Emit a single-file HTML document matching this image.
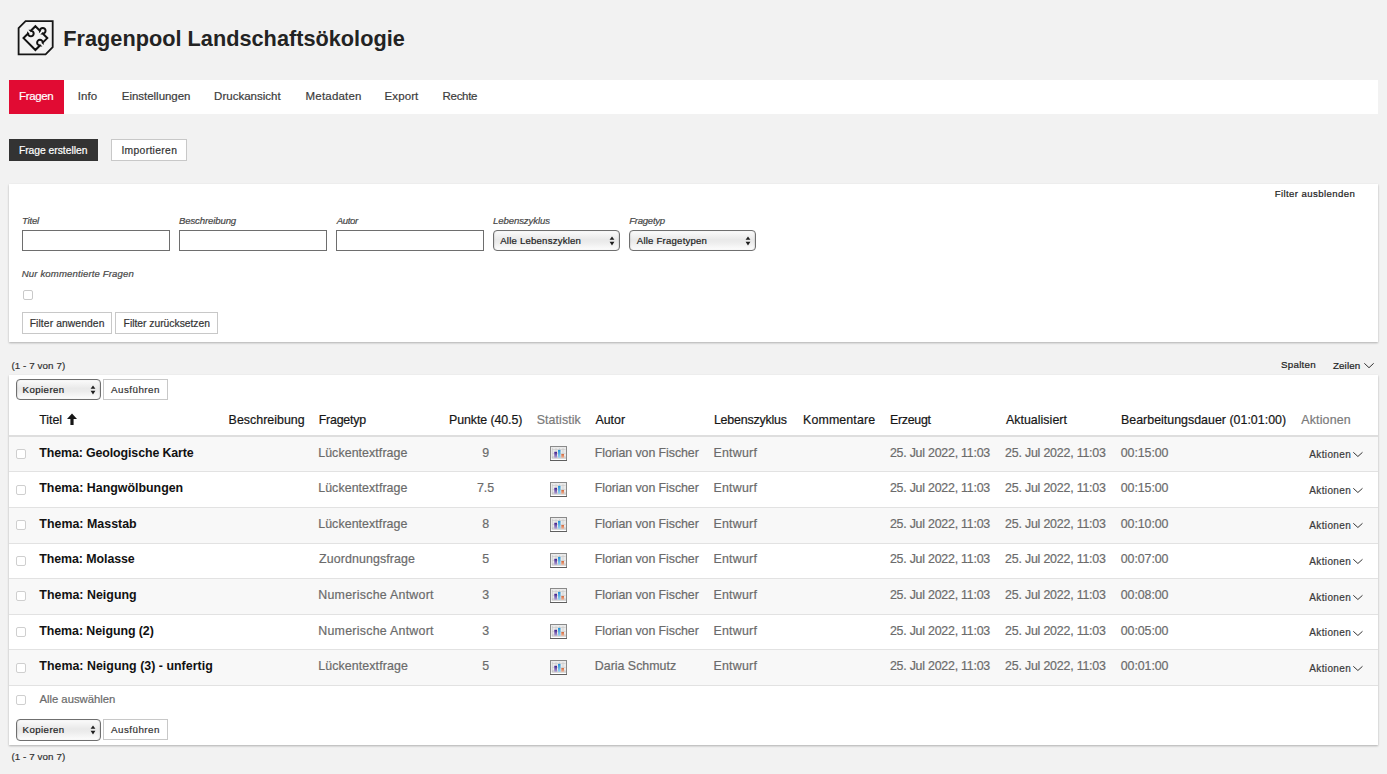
<!DOCTYPE html>
<html><head><meta charset="utf-8"><title>Fragenpool</title>
<style>
html,body{margin:0;padding:0;}
body{width:1387px;height:774px;background:#f2f2f2;position:relative;overflow:hidden;font-family:"Liberation Sans",sans-serif;}
body>div,body>span,body>svg{position:absolute;display:block;}
span{white-space:nowrap;-webkit-text-stroke:0.2px currentColor;}
span.b{-webkit-text-stroke:0;}
</style></head><body>
<svg style="left:0;top:0" width="80" height="70" viewBox="0 0 80 70"><path d="M25.6 21.2 H52.7 V47.2 L45.6 54.3 H18.6 V28.2 Z" fill="none" stroke="#161616" stroke-width="1.8"/>
<path transform="translate(35.4 38.1) rotate(45)" d="M-8.4 -8.4 L-1.95 -8.4 L-1.95 -8.391 A2.8 2.8 0 1 1 1.95 -8.391 L1.95 -8.4 L8.4 -8.4 L8.4 -1.95 L8.409 -1.95 A2.8 2.8 0 1 0 8.409 1.95 L8.4 1.95 L8.4 8.4 L-8.4 8.4 L-8.4 1.95 L-8.409 1.95 A2.8 2.8 0 1 0 -8.409 -1.95 L-8.4 -1.95 Z" fill="none" stroke="#111" stroke-width="2"/></svg>
<span class="b" style="left:63.30px;top:27.36px;font-size:21.7px;line-height:24.239px;color:#232323;font-weight:bold;letter-spacing:0.017px;">Fragenpool Landschaftsökologie</span>
<div style="left:9px;top:80px;width:1369px;height:34px;background:#fff"></div>
<div style="left:9px;top:80px;width:55px;height:34px;background:#e10b33"></div>
<span style="left:19.10px;top:90.29px;font-size:11.5px;line-height:12.845px;color:#fff;letter-spacing:-0.388px;">Fragen</span>
<span style="left:77.80px;top:90.29px;font-size:11.5px;line-height:12.845px;color:#3c3c3c;letter-spacing:0.074px;">Info</span>
<span style="left:121.80px;top:90.29px;font-size:11.5px;line-height:12.845px;color:#3c3c3c;letter-spacing:-0.030px;">Einstellungen</span>
<span style="left:214.10px;top:90.29px;font-size:11.5px;line-height:12.845px;color:#3c3c3c;letter-spacing:0.013px;">Druckansicht</span>
<span style="left:305.60px;top:90.29px;font-size:11.5px;line-height:12.845px;color:#3c3c3c;letter-spacing:0.182px;">Metadaten</span>
<span style="left:384.56px;top:90.29px;font-size:11.5px;line-height:12.845px;color:#3c3c3c;letter-spacing:0.092px;">Export</span>
<span style="left:442.60px;top:90.29px;font-size:11.5px;line-height:12.845px;color:#3c3c3c;letter-spacing:-0.308px;">Rechte</span>
<div style="left:9px;top:139px;width:89px;height:22px;background:#333"></div>
<span style="left:18.92px;top:144.58px;font-size:10.3px;line-height:11.505px;color:#fff;letter-spacing:-0.013px;">Frage erstellen</span>
<div style="left:111px;top:139px;width:76px;height:22px;background:#fff;border:1px solid #c8c8c8;box-sizing:border-box"></div>
<span style="left:121.40px;top:144.58px;font-size:10.3px;line-height:11.505px;color:#333;letter-spacing:0.340px;">Importieren</span>
<div style="left:9px;top:184px;width:1369px;height:158px;background:#fff;box-shadow:0 1px 2px rgba(0,0,0,.28)"></div>
<span style="left:1274.70px;top:189.01px;font-size:9.6px;line-height:10.723px;color:#222;letter-spacing:0.410px;">Filter ausblenden</span>
<span style="left:22.10px;top:216.11px;font-size:9.6px;line-height:10.723px;color:#474747;font-style:italic;letter-spacing:-0.263px;">Titel</span>
<span style="left:179.00px;top:216.11px;font-size:9.6px;line-height:10.723px;color:#474747;font-style:italic;letter-spacing:-0.137px;">Beschreibung</span>
<span style="left:336.80px;top:216.11px;font-size:9.6px;line-height:10.723px;color:#474747;font-style:italic;letter-spacing:-0.387px;">Autor</span>
<span style="left:493.00px;top:216.11px;font-size:9.6px;line-height:10.723px;color:#474747;font-style:italic;letter-spacing:-0.106px;">Lebenszyklus</span>
<span style="left:629.20px;top:216.11px;font-size:9.6px;line-height:10.723px;color:#474747;font-style:italic;letter-spacing:-0.270px;">Fragetyp</span>
<div style="left:22px;top:230px;width:148px;height:21px;background:#fff;border:1px solid #6e6e6e;box-sizing:border-box"></div>
<div style="left:179px;top:230px;width:148px;height:21px;background:#fff;border:1px solid #6e6e6e;box-sizing:border-box"></div>
<div style="left:336px;top:230px;width:148px;height:21px;background:#fff;border:1px solid #6e6e6e;box-sizing:border-box"></div>
<div style="left:493px;top:230px;width:127px;height:21px;border:1px solid #6f6f6f;box-sizing:border-box;border-radius:4px;background:linear-gradient(#fbfbfb,#e9e9e9 45%,#ececec 60%,#fdfdfd);box-shadow:inset 1px 0 1px rgba(0,0,0,.08),inset -1px 0 1px rgba(0,0,0,.08)"></div>
<span style="left:500.26px;top:235.51px;font-size:9.6px;line-height:10.723px;color:#222;letter-spacing:0.207px;">Alle Lebenszyklen</span>
<svg style="left:608.8px;top:235.5px" width="6" height="10" viewBox="0 0 6 10"><path d="M0.6 3.7 L3 0.4 L5.4 3.7 Z M0.6 5.8 L3 9.4 L5.4 5.8 Z" fill="#1e1e1e"/></svg>
<div style="left:629px;top:230px;width:127px;height:21px;border:1px solid #6f6f6f;box-sizing:border-box;border-radius:4px;background:linear-gradient(#fbfbfb,#e9e9e9 45%,#ececec 60%,#fdfdfd);box-shadow:inset 1px 0 1px rgba(0,0,0,.08),inset -1px 0 1px rgba(0,0,0,.08)"></div>
<span style="left:636.80px;top:235.51px;font-size:9.6px;line-height:10.723px;color:#222;letter-spacing:0.212px;">Alle Fragetypen</span>
<svg style="left:744.8px;top:235.5px" width="6" height="10" viewBox="0 0 6 10"><path d="M0.6 3.7 L3 0.4 L5.4 3.7 Z M0.6 5.8 L3 9.4 L5.4 5.8 Z" fill="#1e1e1e"/></svg>
<span style="left:21.80px;top:269.41px;font-size:9.6px;line-height:10.723px;color:#474747;font-style:italic;letter-spacing:0.124px;">Nur kommentierte Fragen</span>
<div style="left:23px;top:290px;width:10px;height:10px;background:#fff;border:1px solid #c9c9c9;box-sizing:border-box;border-radius:2px"></div>
<div style="left:22px;top:312px;width:90px;height:22px;background:#fff;border:1px solid #c8c8c8;box-sizing:border-box"></div>
<span style="left:29.70px;top:317.78px;font-size:10.3px;line-height:11.505px;color:#333;letter-spacing:0.100px;">Filter anwenden</span>
<div style="left:115px;top:312px;width:103px;height:22px;background:#fff;border:1px solid #c8c8c8;box-sizing:border-box"></div>
<span style="left:123.60px;top:317.78px;font-size:10.3px;line-height:11.505px;color:#333;letter-spacing:-0.002px;">Filter zurücksetzen</span>
<span style="left:11.40px;top:361.13px;font-size:9.8px;line-height:10.947px;color:#333;letter-spacing:0.088px;">(1 - 7 von 7)</span>
<span style="left:1281.10px;top:360.03px;font-size:9.8px;line-height:10.947px;color:#222;letter-spacing:0.212px;">Spalten</span>
<span style="left:1332.90px;top:361.03px;font-size:9.8px;line-height:10.947px;color:#222;letter-spacing:0.141px;">Zeilen</span>
<svg style="left:1362.7px;top:362px" width="12" height="7" viewBox="-1 -1 12 7"><path d="M0.3 0.3 L5.0 4.7 L9.7 0.3" fill="none" stroke="#333" stroke-width="1.0"/></svg>
<div style="left:9px;top:375px;width:1369px;height:370px;background:#fff;box-shadow:0 1px 2px rgba(0,0,0,.28)"></div>
<div style="left:16px;top:379px;width:85px;height:21px;border:1px solid #6f6f6f;box-sizing:border-box;border-radius:4px;background:linear-gradient(#fbfbfb,#e9e9e9 45%,#ececec 60%,#fdfdfd);box-shadow:inset 1px 0 1px rgba(0,0,0,.08),inset -1px 0 1px rgba(0,0,0,.08)"></div>
<span style="left:22.60px;top:385.01px;font-size:9.6px;line-height:10.723px;color:#222;letter-spacing:0.453px;">Kopieren</span>
<svg style="left:89.8px;top:384.5px" width="6" height="10" viewBox="0 0 6 10"><path d="M0.6 3.7 L3 0.4 L5.4 3.7 Z M0.6 5.8 L3 9.4 L5.4 5.8 Z" fill="#1e1e1e"/></svg>
<div style="left:103px;top:379px;width:65px;height:21px;background:#fff;border:1px solid #c8c8c8;box-sizing:border-box"></div>
<span style="left:111.00px;top:384.83px;font-size:9.8px;line-height:10.947px;color:#333;letter-spacing:0.466px;">Ausführen</span>
<span style="left:39.30px;top:413.58px;font-size:12.4px;line-height:13.851px;color:#161616;letter-spacing:-0.067px;">Titel</span>
<span style="left:228.60px;top:413.58px;font-size:12.4px;line-height:13.851px;color:#161616;letter-spacing:0.024px;">Beschreibung</span>
<span style="left:318.74px;top:413.58px;font-size:12.4px;line-height:13.851px;color:#161616;letter-spacing:-0.219px;">Fragetyp</span>
<span style="left:449.10px;top:413.58px;font-size:12.4px;line-height:13.851px;color:#161616;letter-spacing:-0.097px;">Punkte (40.5)</span>
<span style="left:536.70px;top:413.58px;font-size:12.4px;line-height:13.851px;color:#7a7a7a;letter-spacing:0.086px;">Statistik</span>
<span style="left:595.44px;top:413.58px;font-size:12.4px;line-height:13.851px;color:#161616;letter-spacing:0.015px;">Autor</span>
<span style="left:713.92px;top:413.58px;font-size:12.4px;line-height:13.851px;color:#161616;letter-spacing:-0.185px;">Lebenszyklus</span>
<span style="left:803.10px;top:413.58px;font-size:12.4px;line-height:13.851px;color:#161616;letter-spacing:0.112px;">Kommentare</span>
<span style="left:889.92px;top:413.58px;font-size:12.4px;line-height:13.851px;color:#161616;letter-spacing:-0.273px;">Erzeugt</span>
<span style="left:1005.90px;top:413.58px;font-size:12.4px;line-height:13.851px;color:#161616;letter-spacing:0.041px;">Aktualisiert</span>
<span style="left:1121.00px;top:413.58px;font-size:12.4px;line-height:13.851px;color:#161616;letter-spacing:0.016px;">Bearbeitungsdauer (01:01:00)</span>
<span style="left:1301.30px;top:413.58px;font-size:12.4px;line-height:13.851px;color:#7a7a7a;letter-spacing:0.163px;">Aktionen</span>
<svg style="left:66px;top:413px" width="12" height="13" viewBox="0 0 12 13"><path d="M6 0.5 L11 6 L7.6 6 L7.6 12 L4.4 12 L4.4 6 L1 6 Z" fill="#161616"/></svg>
<div style="left:9px;top:435px;width:1369px;height:2px;background:#dedede"></div>
<div style="left:9px;top:437px;width:1369px;height:34px;background:#f8f8f8"></div>
<div style="left:9px;top:471px;width:1369px;height:1px;background:#e2e2e2"></div>
<div style="left:16px;top:449px;width:10px;height:10px;background:#fff;border:1px solid #cfcfcf;box-sizing:border-box;border-radius:2px"></div>
<span class="b" style="left:39.30px;top:447.08px;font-size:12.4px;line-height:13.851px;color:#111;font-weight:bold;letter-spacing:-0.111px;">Thema: Geologische Karte</span>
<span style="left:318.20px;top:447.08px;font-size:12.4px;line-height:13.851px;color:#6b6b6b;letter-spacing:0.076px;">Lückentextfrage</span>
<span style="left:482.35px;top:447.08px;font-size:12.4px;line-height:13.851px;color:#6b6b6b;">9</span>
<svg style="left:550px;top:446px" width="18" height="16" viewBox="0 0 18 16">
<defs><linearGradient id="gp" x1="0" y1="0" x2="0" y2="1"><stop offset="0" stop-color="#3a1a8a"/><stop offset="1" stop-color="#b7a6d8"/></linearGradient>
<linearGradient id="gb" x1="0" y1="0" x2="0" y2="1"><stop offset="0" stop-color="#1e8fd6"/><stop offset="1" stop-color="#9fd6f2"/></linearGradient>
<linearGradient id="go" x1="0" y1="0" x2="0" y2="1"><stop offset="0" stop-color="#d2673a"/><stop offset="1" stop-color="#f0b79c"/></linearGradient></defs>
<rect x="0.5" y="0.5" width="16" height="14" fill="#fff" stroke="#8a8a8a" stroke-width="1"/>
<path d="M0 14.5 H17" stroke="#5e5e5e" stroke-width="1"/>
<rect x="1" y="1" width="15" height="11.5" fill="#eaeaea"/>
<path d="M2 3.5 H15.5 M2 7.5 H15.5 M2 10.5 H15.5 M2.5 2 V12 M6 2 V12 M9.5 2 V12 M13 2 V12" stroke="#c8c8c8" stroke-width="0.6"/>
<path d="M2 12 H16" stroke="#9a9a9a" stroke-width="0.6"/>
<rect x="4.3" y="5.8" width="2.7" height="6" fill="url(#gp)"/>
<rect x="8" y="3.9" width="2.5" height="7.9" fill="url(#gb)"/>
<rect x="11.3" y="8" width="2.7" height="3.8" fill="url(#go)"/>
</svg>
<span style="left:594.80px;top:447.08px;font-size:12.4px;line-height:13.851px;color:#6b6b6b;letter-spacing:-0.076px;">Florian von Fischer</span>
<span style="left:713.44px;top:447.08px;font-size:12.4px;line-height:13.851px;color:#6b6b6b;letter-spacing:0.250px;">Entwurf</span>
<span style="left:889.92px;top:447.08px;font-size:12.4px;line-height:13.851px;color:#6b6b6b;letter-spacing:-0.232px;">25. Jul 2022, 11:03</span>
<span style="left:1005.10px;top:447.08px;font-size:12.4px;line-height:13.851px;color:#6b6b6b;letter-spacing:-0.204px;">25. Jul 2022, 11:03</span>
<span style="left:1120.80px;top:447.08px;font-size:12.4px;line-height:13.851px;color:#6b6b6b;letter-spacing:-0.082px;">00:15:00</span>
<span style="left:1309.26px;top:448.85px;font-size:10.0px;line-height:11.17px;color:#3a3a3a;letter-spacing:0.369px;">Aktionen</span>
<svg style="left:1352.1px;top:451.09999999999997px" width="11.8" height="6.8" viewBox="-1 -1 11.8 6.8"><path d="M0.3 0.3 L4.9 4.5 L9.5 0.3" fill="none" stroke="#333" stroke-width="1.0"/></svg>
<div style="left:9px;top:507px;width:1369px;height:1px;background:#e2e2e2"></div>
<div style="left:16px;top:485px;width:10px;height:10px;background:#fff;border:1px solid #cfcfcf;box-sizing:border-box;border-radius:2px"></div>
<span class="b" style="left:39.30px;top:481.68px;font-size:12.4px;line-height:13.851px;color:#111;font-weight:bold;">Thema: Hangwölbungen</span>
<span style="left:318.20px;top:481.68px;font-size:12.4px;line-height:13.851px;color:#6b6b6b;letter-spacing:0.077px;">Lückentextfrage</span>
<span style="left:476.88px;top:481.68px;font-size:12.4px;line-height:13.851px;color:#6b6b6b;">7.5</span>
<svg style="left:550px;top:482px" width="18" height="16" viewBox="0 0 18 16">
<defs><linearGradient id="gp" x1="0" y1="0" x2="0" y2="1"><stop offset="0" stop-color="#3a1a8a"/><stop offset="1" stop-color="#b7a6d8"/></linearGradient>
<linearGradient id="gb" x1="0" y1="0" x2="0" y2="1"><stop offset="0" stop-color="#1e8fd6"/><stop offset="1" stop-color="#9fd6f2"/></linearGradient>
<linearGradient id="go" x1="0" y1="0" x2="0" y2="1"><stop offset="0" stop-color="#d2673a"/><stop offset="1" stop-color="#f0b79c"/></linearGradient></defs>
<rect x="0.5" y="0.5" width="16" height="14" fill="#fff" stroke="#8a8a8a" stroke-width="1"/>
<path d="M0 14.5 H17" stroke="#5e5e5e" stroke-width="1"/>
<rect x="1" y="1" width="15" height="11.5" fill="#eaeaea"/>
<path d="M2 3.5 H15.5 M2 7.5 H15.5 M2 10.5 H15.5 M2.5 2 V12 M6 2 V12 M9.5 2 V12 M13 2 V12" stroke="#c8c8c8" stroke-width="0.6"/>
<path d="M2 12 H16" stroke="#9a9a9a" stroke-width="0.6"/>
<rect x="4.3" y="5.8" width="2.7" height="6" fill="url(#gp)"/>
<rect x="8" y="3.9" width="2.5" height="7.9" fill="url(#gb)"/>
<rect x="11.3" y="8" width="2.7" height="3.8" fill="url(#go)"/>
</svg>
<span style="left:594.80px;top:481.68px;font-size:12.4px;line-height:13.851px;color:#6b6b6b;letter-spacing:-0.076px;">Florian von Fischer</span>
<span style="left:713.44px;top:481.68px;font-size:12.4px;line-height:13.851px;color:#6b6b6b;letter-spacing:0.250px;">Entwurf</span>
<span style="left:889.92px;top:481.68px;font-size:12.4px;line-height:13.851px;color:#6b6b6b;letter-spacing:-0.232px;">25. Jul 2022, 11:03</span>
<span style="left:1005.10px;top:481.68px;font-size:12.4px;line-height:13.851px;color:#6b6b6b;letter-spacing:-0.204px;">25. Jul 2022, 11:03</span>
<span style="left:1120.80px;top:481.68px;font-size:12.4px;line-height:13.851px;color:#6b6b6b;letter-spacing:-0.082px;">00:15:00</span>
<span style="left:1309.26px;top:484.85px;font-size:10.0px;line-height:11.17px;color:#3a3a3a;letter-spacing:0.369px;">Aktionen</span>
<svg style="left:1352.1px;top:487.09999999999997px" width="11.8" height="6.8" viewBox="-1 -1 11.8 6.8"><path d="M0.3 0.3 L4.9 4.5 L9.5 0.3" fill="none" stroke="#333" stroke-width="1.0"/></svg>
<div style="left:9px;top:508px;width:1369px;height:35px;background:#f8f8f8"></div>
<div style="left:9px;top:543px;width:1369px;height:1px;background:#e2e2e2"></div>
<div style="left:16px;top:520px;width:10px;height:10px;background:#fff;border:1px solid #cfcfcf;box-sizing:border-box;border-radius:2px"></div>
<span class="b" style="left:39.30px;top:517.68px;font-size:12.4px;line-height:13.851px;color:#111;font-weight:bold;letter-spacing:0.022px;">Thema: Masstab</span>
<span style="left:318.20px;top:517.68px;font-size:12.4px;line-height:13.851px;color:#6b6b6b;letter-spacing:0.076px;">Lückentextfrage</span>
<span style="left:482.35px;top:517.68px;font-size:12.4px;line-height:13.851px;color:#6b6b6b;">8</span>
<svg style="left:550px;top:517px" width="18" height="16" viewBox="0 0 18 16">
<defs><linearGradient id="gp" x1="0" y1="0" x2="0" y2="1"><stop offset="0" stop-color="#3a1a8a"/><stop offset="1" stop-color="#b7a6d8"/></linearGradient>
<linearGradient id="gb" x1="0" y1="0" x2="0" y2="1"><stop offset="0" stop-color="#1e8fd6"/><stop offset="1" stop-color="#9fd6f2"/></linearGradient>
<linearGradient id="go" x1="0" y1="0" x2="0" y2="1"><stop offset="0" stop-color="#d2673a"/><stop offset="1" stop-color="#f0b79c"/></linearGradient></defs>
<rect x="0.5" y="0.5" width="16" height="14" fill="#fff" stroke="#8a8a8a" stroke-width="1"/>
<path d="M0 14.5 H17" stroke="#5e5e5e" stroke-width="1"/>
<rect x="1" y="1" width="15" height="11.5" fill="#eaeaea"/>
<path d="M2 3.5 H15.5 M2 7.5 H15.5 M2 10.5 H15.5 M2.5 2 V12 M6 2 V12 M9.5 2 V12 M13 2 V12" stroke="#c8c8c8" stroke-width="0.6"/>
<path d="M2 12 H16" stroke="#9a9a9a" stroke-width="0.6"/>
<rect x="4.3" y="5.8" width="2.7" height="6" fill="url(#gp)"/>
<rect x="8" y="3.9" width="2.5" height="7.9" fill="url(#gb)"/>
<rect x="11.3" y="8" width="2.7" height="3.8" fill="url(#go)"/>
</svg>
<span style="left:594.80px;top:517.68px;font-size:12.4px;line-height:13.851px;color:#6b6b6b;letter-spacing:-0.076px;">Florian von Fischer</span>
<span style="left:713.44px;top:517.68px;font-size:12.4px;line-height:13.851px;color:#6b6b6b;letter-spacing:0.250px;">Entwurf</span>
<span style="left:889.92px;top:517.68px;font-size:12.4px;line-height:13.851px;color:#6b6b6b;letter-spacing:-0.232px;">25. Jul 2022, 11:03</span>
<span style="left:1005.10px;top:517.68px;font-size:12.4px;line-height:13.851px;color:#6b6b6b;letter-spacing:-0.204px;">25. Jul 2022, 11:03</span>
<span style="left:1120.80px;top:517.68px;font-size:12.4px;line-height:13.851px;color:#6b6b6b;letter-spacing:-0.082px;">00:10:00</span>
<span style="left:1309.26px;top:519.85px;font-size:10.0px;line-height:11.17px;color:#3a3a3a;letter-spacing:0.369px;">Aktionen</span>
<svg style="left:1352.1px;top:522.1px" width="11.8" height="6.8" viewBox="-1 -1 11.8 6.8"><path d="M0.3 0.3 L4.9 4.5 L9.5 0.3" fill="none" stroke="#333" stroke-width="1.0"/></svg>
<div style="left:9px;top:578px;width:1369px;height:1px;background:#e2e2e2"></div>
<div style="left:16px;top:556px;width:10px;height:10px;background:#fff;border:1px solid #cfcfcf;box-sizing:border-box;border-radius:2px"></div>
<span class="b" style="left:39.30px;top:552.78px;font-size:12.4px;line-height:13.851px;color:#111;font-weight:bold;letter-spacing:-0.075px;">Thema: Molasse</span>
<span style="left:319.00px;top:552.78px;font-size:12.4px;line-height:13.851px;color:#6b6b6b;letter-spacing:0.112px;">Zuordnungsfrage</span>
<span style="left:482.35px;top:552.78px;font-size:12.4px;line-height:13.851px;color:#6b6b6b;">5</span>
<svg style="left:550px;top:553px" width="18" height="16" viewBox="0 0 18 16">
<defs><linearGradient id="gp" x1="0" y1="0" x2="0" y2="1"><stop offset="0" stop-color="#3a1a8a"/><stop offset="1" stop-color="#b7a6d8"/></linearGradient>
<linearGradient id="gb" x1="0" y1="0" x2="0" y2="1"><stop offset="0" stop-color="#1e8fd6"/><stop offset="1" stop-color="#9fd6f2"/></linearGradient>
<linearGradient id="go" x1="0" y1="0" x2="0" y2="1"><stop offset="0" stop-color="#d2673a"/><stop offset="1" stop-color="#f0b79c"/></linearGradient></defs>
<rect x="0.5" y="0.5" width="16" height="14" fill="#fff" stroke="#8a8a8a" stroke-width="1"/>
<path d="M0 14.5 H17" stroke="#5e5e5e" stroke-width="1"/>
<rect x="1" y="1" width="15" height="11.5" fill="#eaeaea"/>
<path d="M2 3.5 H15.5 M2 7.5 H15.5 M2 10.5 H15.5 M2.5 2 V12 M6 2 V12 M9.5 2 V12 M13 2 V12" stroke="#c8c8c8" stroke-width="0.6"/>
<path d="M2 12 H16" stroke="#9a9a9a" stroke-width="0.6"/>
<rect x="4.3" y="5.8" width="2.7" height="6" fill="url(#gp)"/>
<rect x="8" y="3.9" width="2.5" height="7.9" fill="url(#gb)"/>
<rect x="11.3" y="8" width="2.7" height="3.8" fill="url(#go)"/>
</svg>
<span style="left:594.80px;top:552.78px;font-size:12.4px;line-height:13.851px;color:#6b6b6b;letter-spacing:-0.076px;">Florian von Fischer</span>
<span style="left:713.44px;top:552.78px;font-size:12.4px;line-height:13.851px;color:#6b6b6b;letter-spacing:0.250px;">Entwurf</span>
<span style="left:889.92px;top:552.78px;font-size:12.4px;line-height:13.851px;color:#6b6b6b;letter-spacing:-0.232px;">25. Jul 2022, 11:03</span>
<span style="left:1005.10px;top:552.78px;font-size:12.4px;line-height:13.851px;color:#6b6b6b;letter-spacing:-0.204px;">25. Jul 2022, 11:03</span>
<span style="left:1120.80px;top:552.78px;font-size:12.4px;line-height:13.851px;color:#6b6b6b;letter-spacing:-0.082px;">00:07:00</span>
<span style="left:1309.26px;top:555.85px;font-size:10.0px;line-height:11.17px;color:#3a3a3a;letter-spacing:0.369px;">Aktionen</span>
<svg style="left:1352.1px;top:558.1px" width="11.8" height="6.8" viewBox="-1 -1 11.8 6.8"><path d="M0.3 0.3 L4.9 4.5 L9.5 0.3" fill="none" stroke="#333" stroke-width="1.0"/></svg>
<div style="left:9px;top:579px;width:1369px;height:35px;background:#f8f8f8"></div>
<div style="left:9px;top:614px;width:1369px;height:1px;background:#e2e2e2"></div>
<div style="left:16px;top:591px;width:10px;height:10px;background:#fff;border:1px solid #cfcfcf;box-sizing:border-box;border-radius:2px"></div>
<span class="b" style="left:39.30px;top:588.88px;font-size:12.4px;line-height:13.851px;color:#111;font-weight:bold;letter-spacing:0.023px;">Thema: Neigung</span>
<span style="left:318.20px;top:588.88px;font-size:12.4px;line-height:13.851px;color:#6b6b6b;letter-spacing:0.265px;">Numerische Antwort</span>
<span style="left:482.35px;top:588.88px;font-size:12.4px;line-height:13.851px;color:#6b6b6b;">3</span>
<svg style="left:550px;top:588px" width="18" height="16" viewBox="0 0 18 16">
<defs><linearGradient id="gp" x1="0" y1="0" x2="0" y2="1"><stop offset="0" stop-color="#3a1a8a"/><stop offset="1" stop-color="#b7a6d8"/></linearGradient>
<linearGradient id="gb" x1="0" y1="0" x2="0" y2="1"><stop offset="0" stop-color="#1e8fd6"/><stop offset="1" stop-color="#9fd6f2"/></linearGradient>
<linearGradient id="go" x1="0" y1="0" x2="0" y2="1"><stop offset="0" stop-color="#d2673a"/><stop offset="1" stop-color="#f0b79c"/></linearGradient></defs>
<rect x="0.5" y="0.5" width="16" height="14" fill="#fff" stroke="#8a8a8a" stroke-width="1"/>
<path d="M0 14.5 H17" stroke="#5e5e5e" stroke-width="1"/>
<rect x="1" y="1" width="15" height="11.5" fill="#eaeaea"/>
<path d="M2 3.5 H15.5 M2 7.5 H15.5 M2 10.5 H15.5 M2.5 2 V12 M6 2 V12 M9.5 2 V12 M13 2 V12" stroke="#c8c8c8" stroke-width="0.6"/>
<path d="M2 12 H16" stroke="#9a9a9a" stroke-width="0.6"/>
<rect x="4.3" y="5.8" width="2.7" height="6" fill="url(#gp)"/>
<rect x="8" y="3.9" width="2.5" height="7.9" fill="url(#gb)"/>
<rect x="11.3" y="8" width="2.7" height="3.8" fill="url(#go)"/>
</svg>
<span style="left:594.80px;top:588.88px;font-size:12.4px;line-height:13.851px;color:#6b6b6b;letter-spacing:-0.076px;">Florian von Fischer</span>
<span style="left:713.44px;top:588.88px;font-size:12.4px;line-height:13.851px;color:#6b6b6b;letter-spacing:0.250px;">Entwurf</span>
<span style="left:889.92px;top:588.88px;font-size:12.4px;line-height:13.851px;color:#6b6b6b;letter-spacing:-0.232px;">25. Jul 2022, 11:03</span>
<span style="left:1005.10px;top:588.88px;font-size:12.4px;line-height:13.851px;color:#6b6b6b;letter-spacing:-0.204px;">25. Jul 2022, 11:03</span>
<span style="left:1120.80px;top:588.88px;font-size:12.4px;line-height:13.851px;color:#6b6b6b;letter-spacing:-0.082px;">00:08:00</span>
<span style="left:1309.26px;top:591.55px;font-size:10.0px;line-height:11.17px;color:#3a3a3a;letter-spacing:0.369px;">Aktionen</span>
<svg style="left:1352.1px;top:593.8000000000001px" width="11.8" height="6.8" viewBox="-1 -1 11.8 6.8"><path d="M0.3 0.3 L4.9 4.5 L9.5 0.3" fill="none" stroke="#333" stroke-width="1.0"/></svg>
<div style="left:9px;top:649px;width:1369px;height:1px;background:#e2e2e2"></div>
<div style="left:16px;top:627px;width:10px;height:10px;background:#fff;border:1px solid #cfcfcf;box-sizing:border-box;border-radius:2px"></div>
<span class="b" style="left:39.30px;top:624.78px;font-size:12.4px;line-height:13.851px;color:#111;font-weight:bold;letter-spacing:-0.069px;">Thema: Neigung (2)</span>
<span style="left:318.20px;top:624.78px;font-size:12.4px;line-height:13.851px;color:#6b6b6b;letter-spacing:0.265px;">Numerische Antwort</span>
<span style="left:482.35px;top:624.78px;font-size:12.4px;line-height:13.851px;color:#6b6b6b;">3</span>
<svg style="left:550px;top:624px" width="18" height="16" viewBox="0 0 18 16">
<defs><linearGradient id="gp" x1="0" y1="0" x2="0" y2="1"><stop offset="0" stop-color="#3a1a8a"/><stop offset="1" stop-color="#b7a6d8"/></linearGradient>
<linearGradient id="gb" x1="0" y1="0" x2="0" y2="1"><stop offset="0" stop-color="#1e8fd6"/><stop offset="1" stop-color="#9fd6f2"/></linearGradient>
<linearGradient id="go" x1="0" y1="0" x2="0" y2="1"><stop offset="0" stop-color="#d2673a"/><stop offset="1" stop-color="#f0b79c"/></linearGradient></defs>
<rect x="0.5" y="0.5" width="16" height="14" fill="#fff" stroke="#8a8a8a" stroke-width="1"/>
<path d="M0 14.5 H17" stroke="#5e5e5e" stroke-width="1"/>
<rect x="1" y="1" width="15" height="11.5" fill="#eaeaea"/>
<path d="M2 3.5 H15.5 M2 7.5 H15.5 M2 10.5 H15.5 M2.5 2 V12 M6 2 V12 M9.5 2 V12 M13 2 V12" stroke="#c8c8c8" stroke-width="0.6"/>
<path d="M2 12 H16" stroke="#9a9a9a" stroke-width="0.6"/>
<rect x="4.3" y="5.8" width="2.7" height="6" fill="url(#gp)"/>
<rect x="8" y="3.9" width="2.5" height="7.9" fill="url(#gb)"/>
<rect x="11.3" y="8" width="2.7" height="3.8" fill="url(#go)"/>
</svg>
<span style="left:594.80px;top:624.78px;font-size:12.4px;line-height:13.851px;color:#6b6b6b;letter-spacing:-0.076px;">Florian von Fischer</span>
<span style="left:713.44px;top:624.78px;font-size:12.4px;line-height:13.851px;color:#6b6b6b;letter-spacing:0.250px;">Entwurf</span>
<span style="left:889.92px;top:624.78px;font-size:12.4px;line-height:13.851px;color:#6b6b6b;letter-spacing:-0.232px;">25. Jul 2022, 11:03</span>
<span style="left:1005.10px;top:624.78px;font-size:12.4px;line-height:13.851px;color:#6b6b6b;letter-spacing:-0.204px;">25. Jul 2022, 11:03</span>
<span style="left:1120.80px;top:624.78px;font-size:12.4px;line-height:13.851px;color:#6b6b6b;letter-spacing:-0.082px;">00:05:00</span>
<span style="left:1309.26px;top:627.25px;font-size:10.0px;line-height:11.17px;color:#3a3a3a;letter-spacing:0.369px;">Aktionen</span>
<svg style="left:1352.1px;top:629.5px" width="11.8" height="6.8" viewBox="-1 -1 11.8 6.8"><path d="M0.3 0.3 L4.9 4.5 L9.5 0.3" fill="none" stroke="#333" stroke-width="1.0"/></svg>
<div style="left:9px;top:650px;width:1369px;height:35px;background:#f8f8f8"></div>
<div style="left:9px;top:685px;width:1369px;height:1px;background:#e2e2e2"></div>
<div style="left:16px;top:663px;width:10px;height:10px;background:#fff;border:1px solid #cfcfcf;box-sizing:border-box;border-radius:2px"></div>
<span class="b" style="left:39.30px;top:659.58px;font-size:12.4px;line-height:13.851px;color:#111;font-weight:bold;letter-spacing:0.023px;">Thema: Neigung (3) - unfertig</span>
<span style="left:318.20px;top:659.58px;font-size:12.4px;line-height:13.851px;color:#6b6b6b;letter-spacing:0.105px;">Lückentextfrage</span>
<span style="left:482.35px;top:659.58px;font-size:12.4px;line-height:13.851px;color:#6b6b6b;">5</span>
<svg style="left:550px;top:660px" width="18" height="16" viewBox="0 0 18 16">
<defs><linearGradient id="gp" x1="0" y1="0" x2="0" y2="1"><stop offset="0" stop-color="#3a1a8a"/><stop offset="1" stop-color="#b7a6d8"/></linearGradient>
<linearGradient id="gb" x1="0" y1="0" x2="0" y2="1"><stop offset="0" stop-color="#1e8fd6"/><stop offset="1" stop-color="#9fd6f2"/></linearGradient>
<linearGradient id="go" x1="0" y1="0" x2="0" y2="1"><stop offset="0" stop-color="#d2673a"/><stop offset="1" stop-color="#f0b79c"/></linearGradient></defs>
<rect x="0.5" y="0.5" width="16" height="14" fill="#fff" stroke="#8a8a8a" stroke-width="1"/>
<path d="M0 14.5 H17" stroke="#5e5e5e" stroke-width="1"/>
<rect x="1" y="1" width="15" height="11.5" fill="#eaeaea"/>
<path d="M2 3.5 H15.5 M2 7.5 H15.5 M2 10.5 H15.5 M2.5 2 V12 M6 2 V12 M9.5 2 V12 M13 2 V12" stroke="#c8c8c8" stroke-width="0.6"/>
<path d="M2 12 H16" stroke="#9a9a9a" stroke-width="0.6"/>
<rect x="4.3" y="5.8" width="2.7" height="6" fill="url(#gp)"/>
<rect x="8" y="3.9" width="2.5" height="7.9" fill="url(#gb)"/>
<rect x="11.3" y="8" width="2.7" height="3.8" fill="url(#go)"/>
</svg>
<span style="left:594.80px;top:659.58px;font-size:12.4px;line-height:13.851px;color:#6b6b6b;letter-spacing:0.004px;">Daria Schmutz</span>
<span style="left:713.44px;top:659.58px;font-size:12.4px;line-height:13.851px;color:#6b6b6b;letter-spacing:0.250px;">Entwurf</span>
<span style="left:889.92px;top:659.58px;font-size:12.4px;line-height:13.851px;color:#6b6b6b;letter-spacing:-0.232px;">25. Jul 2022, 11:03</span>
<span style="left:1005.10px;top:659.58px;font-size:12.4px;line-height:13.851px;color:#6b6b6b;letter-spacing:-0.204px;">25. Jul 2022, 11:03</span>
<span style="left:1120.80px;top:659.58px;font-size:12.4px;line-height:13.851px;color:#6b6b6b;letter-spacing:-0.082px;">00:01:00</span>
<span style="left:1309.26px;top:662.85px;font-size:10.0px;line-height:11.17px;color:#3a3a3a;letter-spacing:0.369px;">Aktionen</span>
<svg style="left:1352.1px;top:665.1px" width="11.8" height="6.8" viewBox="-1 -1 11.8 6.8"><path d="M0.3 0.3 L4.9 4.5 L9.5 0.3" fill="none" stroke="#333" stroke-width="1.0"/></svg>
<div style="left:16px;top:695px;width:10px;height:10px;background:#fff;border:1px solid #cfcfcf;box-sizing:border-box;border-radius:2px"></div>
<span style="left:39.40px;top:693.17px;font-size:11.3px;line-height:12.622px;color:#6b6b6b;">Alle auswählen</span>
<div style="left:16px;top:719px;width:85px;height:22px;border:1px solid #6f6f6f;box-sizing:border-box;border-radius:4px;background:linear-gradient(#fbfbfb,#e9e9e9 45%,#ececec 60%,#fdfdfd);box-shadow:inset 1px 0 1px rgba(0,0,0,.08),inset -1px 0 1px rgba(0,0,0,.08)"></div>
<span style="left:22.60px;top:724.81px;font-size:9.6px;line-height:10.723px;color:#222;letter-spacing:0.453px;">Kopieren</span>
<svg style="left:89.8px;top:725.0px" width="6" height="10" viewBox="0 0 6 10"><path d="M0.6 3.7 L3 0.4 L5.4 3.7 Z M0.6 5.8 L3 9.4 L5.4 5.8 Z" fill="#1e1e1e"/></svg>
<div style="left:103px;top:719px;width:65px;height:21px;background:#fff;border:1px solid #c8c8c8;box-sizing:border-box"></div>
<span style="left:111.00px;top:724.63px;font-size:9.8px;line-height:10.947px;color:#333;letter-spacing:0.466px;">Ausführen</span>
<span style="left:11.40px;top:752.13px;font-size:9.8px;line-height:10.947px;color:#333;letter-spacing:0.088px;">(1 - 7 von 7)</span>
</body></html>
